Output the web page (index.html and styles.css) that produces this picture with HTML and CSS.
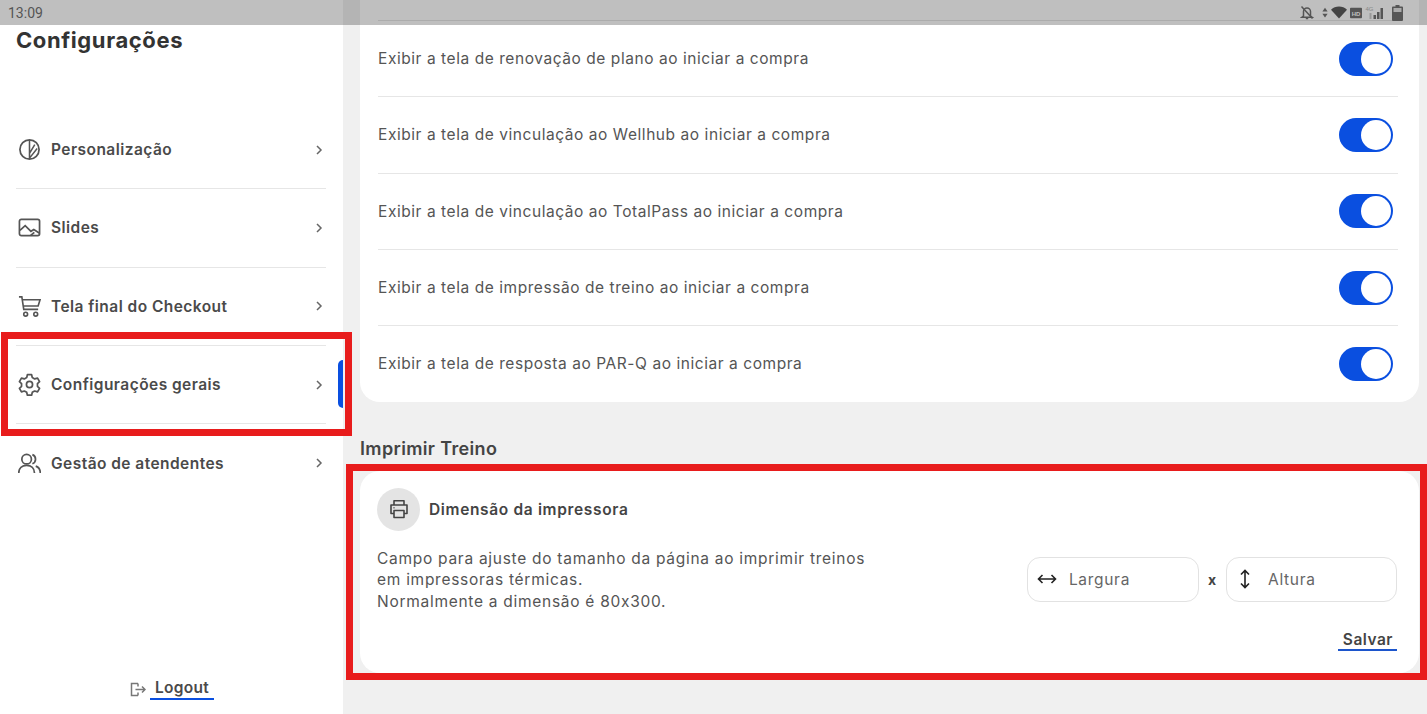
FILE: index.html
```html
<!DOCTYPE html>
<html lang="pt-BR">
<head>
  <meta charset="UTF-8">
  <meta name="viewport" content="width=device-width, initial-scale=1.0">
  <title>Configurações</title>
  <link rel="stylesheet" href="styles.css">
</head>
<body>
  <div class="page">
    <!-- status bar of the tablet -->
    <div class="status-bar">
      <span class="clock">13:09</span>
      <div class="status-icons">
        <svg class="bell" width="14" height="15" viewBox="0 0 14 15" fill="none" stroke="#555" stroke-width="1.5"><path d="M3.5 11V6.5a3.5 3.5 0 0 1 7 0V11l1.5 1.2H2z"/><path d="M5.8 13.5h2.4"/><path d="M1.5 1.5l11 12"/></svg>
        <svg width="6" height="13" viewBox="0 0 8 13" fill="#555"><path d="M4 0l3.5 5H.5z"/><path d="M4 13L.5 8h7z"/></svg>
        <svg width="16" height="13" viewBox="0 0 17 13" fill="#444"><path d="M0 3.5C4.5-1 12.5-1 17 3.5L8.5 13z"/></svg>
        <svg width="12" height="12" viewBox="0 0 14 12"><rect width="14" height="12" rx="1" fill="#555"/><text x="7" y="9" font-size="7" font-weight="700" text-anchor="middle" fill="#c0c0c0" font-family="Liberation Sans">HD</text></svg>
        <svg width="21" height="15" viewBox="0 0 20 15" fill="#555"><text x="0" y="6" font-size="6" fill="#888" font-family="Liberation Sans">4G</text><rect x="4" y="8" width="2" height="6" fill="#999"/><rect x="8" y="10" width="2.5" height="4"/><rect x="11.5" y="7" width="2.5" height="7"/><rect x="15" y="3" width="2.5" height="11"/></svg>
        <svg class="battery" width="11" height="16" viewBox="0 0 11 16"><path d="M3.5 0h4v1.5H10a1 1 0 0 1 1 1V15a1 1 0 0 1-1 1H1a1 1 0 0 1-1-1V2.5a1 1 0 0 1 1-1h2.5z" fill="#555"/><rect x="1.5" y="3" width="8" height="4" fill="#aaa"/></svg>
      </div>
    </div>

    <aside class="sidebar">
      <h1 class="side-title">Configurações</h1>
      <nav class="side-nav">
        <a class="side-item">
          <svg class="side-icon" viewBox="0 0 24 24" fill="none" stroke="#555" stroke-width="1.8"><circle cx="12" cy="12" r="10"/><path d="M12 2v20M12 16l5.5-9M12 21l8-10" stroke-width="1.6"/></svg>
          <span>Personalização</span>
          <svg class="chevron" viewBox="0 0 8 12" fill="none" stroke="#666" stroke-width="1.5"><path d="M2 2l4 4-4 4"/></svg>
        </a>
        <a class="side-item">
          <svg class="side-icon" viewBox="0 0 24 24" fill="none" stroke="#555" stroke-width="1.8"><rect x="1.5" y="3.5" width="21" height="17" rx="2"/><path d="M2 15l5.5-5 6 6 3-2 6 4"/><path d="M13 20.5l4-3.5"/></svg>
          <span>Slides</span>
          <svg class="chevron" viewBox="0 0 8 12" fill="none" stroke="#666" stroke-width="1.5"><path d="M2 2l4 4-4 4"/></svg>
        </a>
        <a class="side-item">
          <svg class="side-icon" viewBox="0 0 24 24" fill="none" stroke="#555" stroke-width="1.7"><path d="M1 2h3l2 13h15"/><path d="M5 5h18l-2 6.5H6"/><circle cx="8" cy="20" r="2"/><circle cx="18.5" cy="20" r="2"/></svg>
          <span>Tela final do Checkout</span>
          <svg class="chevron" viewBox="0 0 8 12" fill="none" stroke="#666" stroke-width="1.5"><path d="M2 2l4 4-4 4"/></svg>
        </a>
        <a class="side-item">
          <svg class="side-icon" viewBox="0 0 24 24" fill="none" stroke="#555" stroke-width="1.8" stroke-linejoin="round"><circle cx="12" cy="12" r="3.2"/><path d="M9.8 1.8h4.4l.7 3 2.5 1.4 3-.9 2.1 3.7-2.2 2.1v2.8l2.2 2.1-2.1 3.7-3-.9-2.5 1.4-.7 3H9.8l-.7-3-2.5-1.4-3 .9-2.1-3.7 2.2-2.1v-2.8L1.5 9l2.1-3.7 3 .9 2.5-1.4z"/></svg>
          <span>Configurações gerais</span>
          <svg class="chevron" viewBox="0 0 8 12" fill="none" stroke="#666" stroke-width="1.5"><path d="M2 2l4 4-4 4"/></svg>
        </a>
        <a class="side-item">
          <svg class="side-icon" viewBox="0 0 24 24" fill="none" stroke="#555" stroke-width="1.8"><circle cx="9" cy="7.5" r="5"/><path d="M.8 22c0-5 3.5-8 8.2-8s8.2 3 8.2 8"/><path d="M15 2.8a5 5 0 0 1 0 9.4M18.5 14.8c3 1 4.8 3.6 4.8 7.2"/></svg>
          <span>Gestão de atendentes</span>
          <svg class="chevron" viewBox="0 0 8 12" fill="none" stroke="#666" stroke-width="1.5"><path d="M2 2l4 4-4 4"/></svg>
        </a>
      </nav>
      <div class="logout-row">
        <svg width="16" height="15" viewBox="0 0 16 15" fill="none" stroke="#777" stroke-width="1.5"><path d="M8 1.5H1.5v12H8M8 1.5v3M8 13.5v-3"/><path d="M5.5 7.5H15M12 4.5l3 3-3 3"/></svg>
        <a class="logout">Logout</a>
      </div>
      <span class="side-marker"></span>
    </aside>

    <main class="content">
      <section class="card options">
        <div class="option"><span>Exibir a tela de renovação de plano ao iniciar a compra</span><span class="toggle"></span></div>
        <div class="option"><span>Exibir a tela de vinculação ao Wellhub ao iniciar a compra</span><span class="toggle"></span></div>
        <div class="option"><span>Exibir a tela de vinculação ao TotalPass ao iniciar a compra</span><span class="toggle"></span></div>
        <div class="option"><span>Exibir a tela de impressão de treino ao iniciar a compra</span><span class="toggle"></span></div>
        <div class="option"><span>Exibir a tela de resposta ao PAR-Q ao iniciar a compra</span><span class="toggle"></span></div>
      </section>

      <h2 class="section-title">Imprimir Treino</h2>

      <section class="card printer">
        <div class="printer-head">
          <span class="printer-badge">
            <svg width="20" height="20" viewBox="0 0 20 20" fill="none" stroke="#444" stroke-width="1.6" stroke-linejoin="round"><path d="M5 6V1.8h10V6"/><path d="M5 14.5H2V6h16v8.5h-3"/><path d="M5 11.5h10v7H5z"/><path d="M4.5 8.8h1"/></svg>
          </span>
          <h3>Dimensão da impressora</h3>
        </div>
        <div class="printer-body">
          <p>Campo para ajuste do tamanho da página ao imprimir treinos<br>em impressoras térmicas.<br>Normalmente a dimensão é 80x300.</p>
          <div class="size-fields">
            <label class="size-field">
              <svg width="20" height="12" viewBox="0 0 20 12" fill="none" stroke="#222" stroke-width="1.6"><path d="M1.5 6h17M5.5 2l-4 4 4 4M14.5 2l4 4-4 4"/></svg>
              <span>Largura</span>
            </label>
            <b class="times">x</b>
            <label class="size-field size-field-height">
              <svg width="12" height="20" viewBox="0 0 12 20" fill="none" stroke="#222" stroke-width="1.6"><path d="M6 1.5v17M2 5.5l4-4 4 4M2 14.5l4 4 4-4"/></svg>
              <span>Altura</span>
            </label>
          </div>
        </div>
        <div class="printer-foot"><a class="save">Salvar</a></div>
      </section>
    </main>

    <!-- red marks drawn over the screenshot -->
    <div class="mark mark-menu"></div>
    <div class="mark mark-printer"></div>
  </div>
</body>
</html>
```

FILE: styles.css
```css
* { box-sizing: border-box; }
body { margin: 0; font-family: Inter, "Noto Sans", sans-serif; color: #444; background: #f0f0f0; }
.page { position: relative; display: grid; grid-template-columns: 343px 1fr; height: 714px; overflow: hidden; }

.status-bar { position: absolute; top: 0; left: 0; right: 0; z-index: 3; height: 25px; padding: 0 24px 0 8px; display: flex; align-items: center; justify-content: space-between; background: rgba(0, 0, 0, 0.25); }
.clock { font-family: Roboto, sans-serif; font-size: 14px; color: #555; }
.status-icons { display: flex; align-items: center; gap: 3px; }
.status-icons .bell { margin-right: 5px; }
.status-icons .battery { margin-left: 3px; }

.sidebar { position: relative; display: flex; flex-direction: column; background: #fff; padding: 0 17px 0 16px; }
.side-title { margin: 27px 0 0; height: 84px; font-size: 22px; line-height: 26px; font-weight: 700; color: #333; letter-spacing: 0.6px; }
.side-nav { display: flex; flex-direction: column; }
.side-item { display: flex; align-items: center; height: 78.3px; border-bottom: 1px solid #e6e6e6; font-size: 15.5px; font-weight: 600; color: #4a4a4a; letter-spacing: 0.45px; }
.side-item:last-child { border-bottom: 0; }
.side-icon { width: 23px; height: 23px; margin-left: 1.5px; margin-right: 10.5px; flex: none; }
.chevron { width: 8px; height: 12px; margin-left: auto; margin-right: 3px; }
.logout-row { margin-top: auto; margin-bottom: 14px; display: flex; align-items: center; justify-content: center; gap: 4px; padding-left: 2px; }
.logout { display: block; padding: 0 5px 1px; border-bottom: 2px solid #0a4fe0; font-size: 15.5px; font-weight: 600; color: #4a4a4a; letter-spacing: 0.3px; }
.side-marker { position: absolute; top: 360px; right: 0; width: 5px; height: 48px; border-radius: 6px 0 0 6px; background: #0a4fe0; }

.content { padding: 0 8px 0 17px; }
.card { background: #fff; border-radius: 20px; }
.options { padding: 20px 21px 0.5px 18px; border-radius: 0 0 20px 20px; }
.option { display: flex; align-items: center; justify-content: space-between; height: 76.3px; padding-right: 5px; border-top: 1px solid #e6e6e6; font-size: 15.5px; color: #555; letter-spacing: 0.56px; }
.toggle { position: relative; display: block; width: 54px; height: 34px; border-radius: 17px; background: #0a4fe0; }
.toggle::after { content: ""; position: absolute; top: 2px; right: 2px; width: 30px; height: 30px; border-radius: 50%; background: #fff; }

.section-title { margin: 34px 0 0; height: 35px; line-height: 26px; font-size: 18px; font-weight: 600; color: #444; letter-spacing: 0.35px; }
.printer { height: 202px; padding: 17px 22px 0 17px; }
.printer-head { display: flex; align-items: center; gap: 9px; }
.printer-badge { display: flex; align-items: center; justify-content: center; width: 43px; height: 43px; border-radius: 50%; background: #e4e4e4; }
.printer-head h3 { margin: 0; font-size: 15.5px; font-weight: 600; color: #444; letter-spacing: 0.65px; }
.printer-body { display: flex; justify-content: space-between; align-items: flex-start; margin-top: 17px; }
.printer-body p { margin: 0; font-size: 15.5px; line-height: 21.5px; color: #555; letter-spacing: 0.72px; }
.size-fields { display: flex; align-items: center; gap: 9px; margin-top: 9px; }
.size-field { display: flex; align-items: center; gap: 12px; width: 172px; height: 45px; padding-left: 9px; border: 1px solid #e2e2e2; border-radius: 13px; font-size: 15.5px; color: #666; letter-spacing: 0.7px; }
.size-field-height { gap: 17px; width: 171px; padding-left: 12px; }
.times { margin-right: 1px; font-size: 14px; color: #444; }
.printer-foot { display: flex; justify-content: flex-end; margin-top: 18px; }
.save { padding: 0 4px 0 5px; border-bottom: 2px solid #1c55cc; font-size: 15.5px; font-weight: 600; color: #444; letter-spacing: 0.5px; }

.mark { position: absolute; z-index: 2; border: 7px solid #e81c1c; }
.mark-menu { left: 1px; top: 332px; width: 351px; height: 104px; }
.mark-printer { left: 346px; top: 464px; width: 1081px; height: 216px; }
```
